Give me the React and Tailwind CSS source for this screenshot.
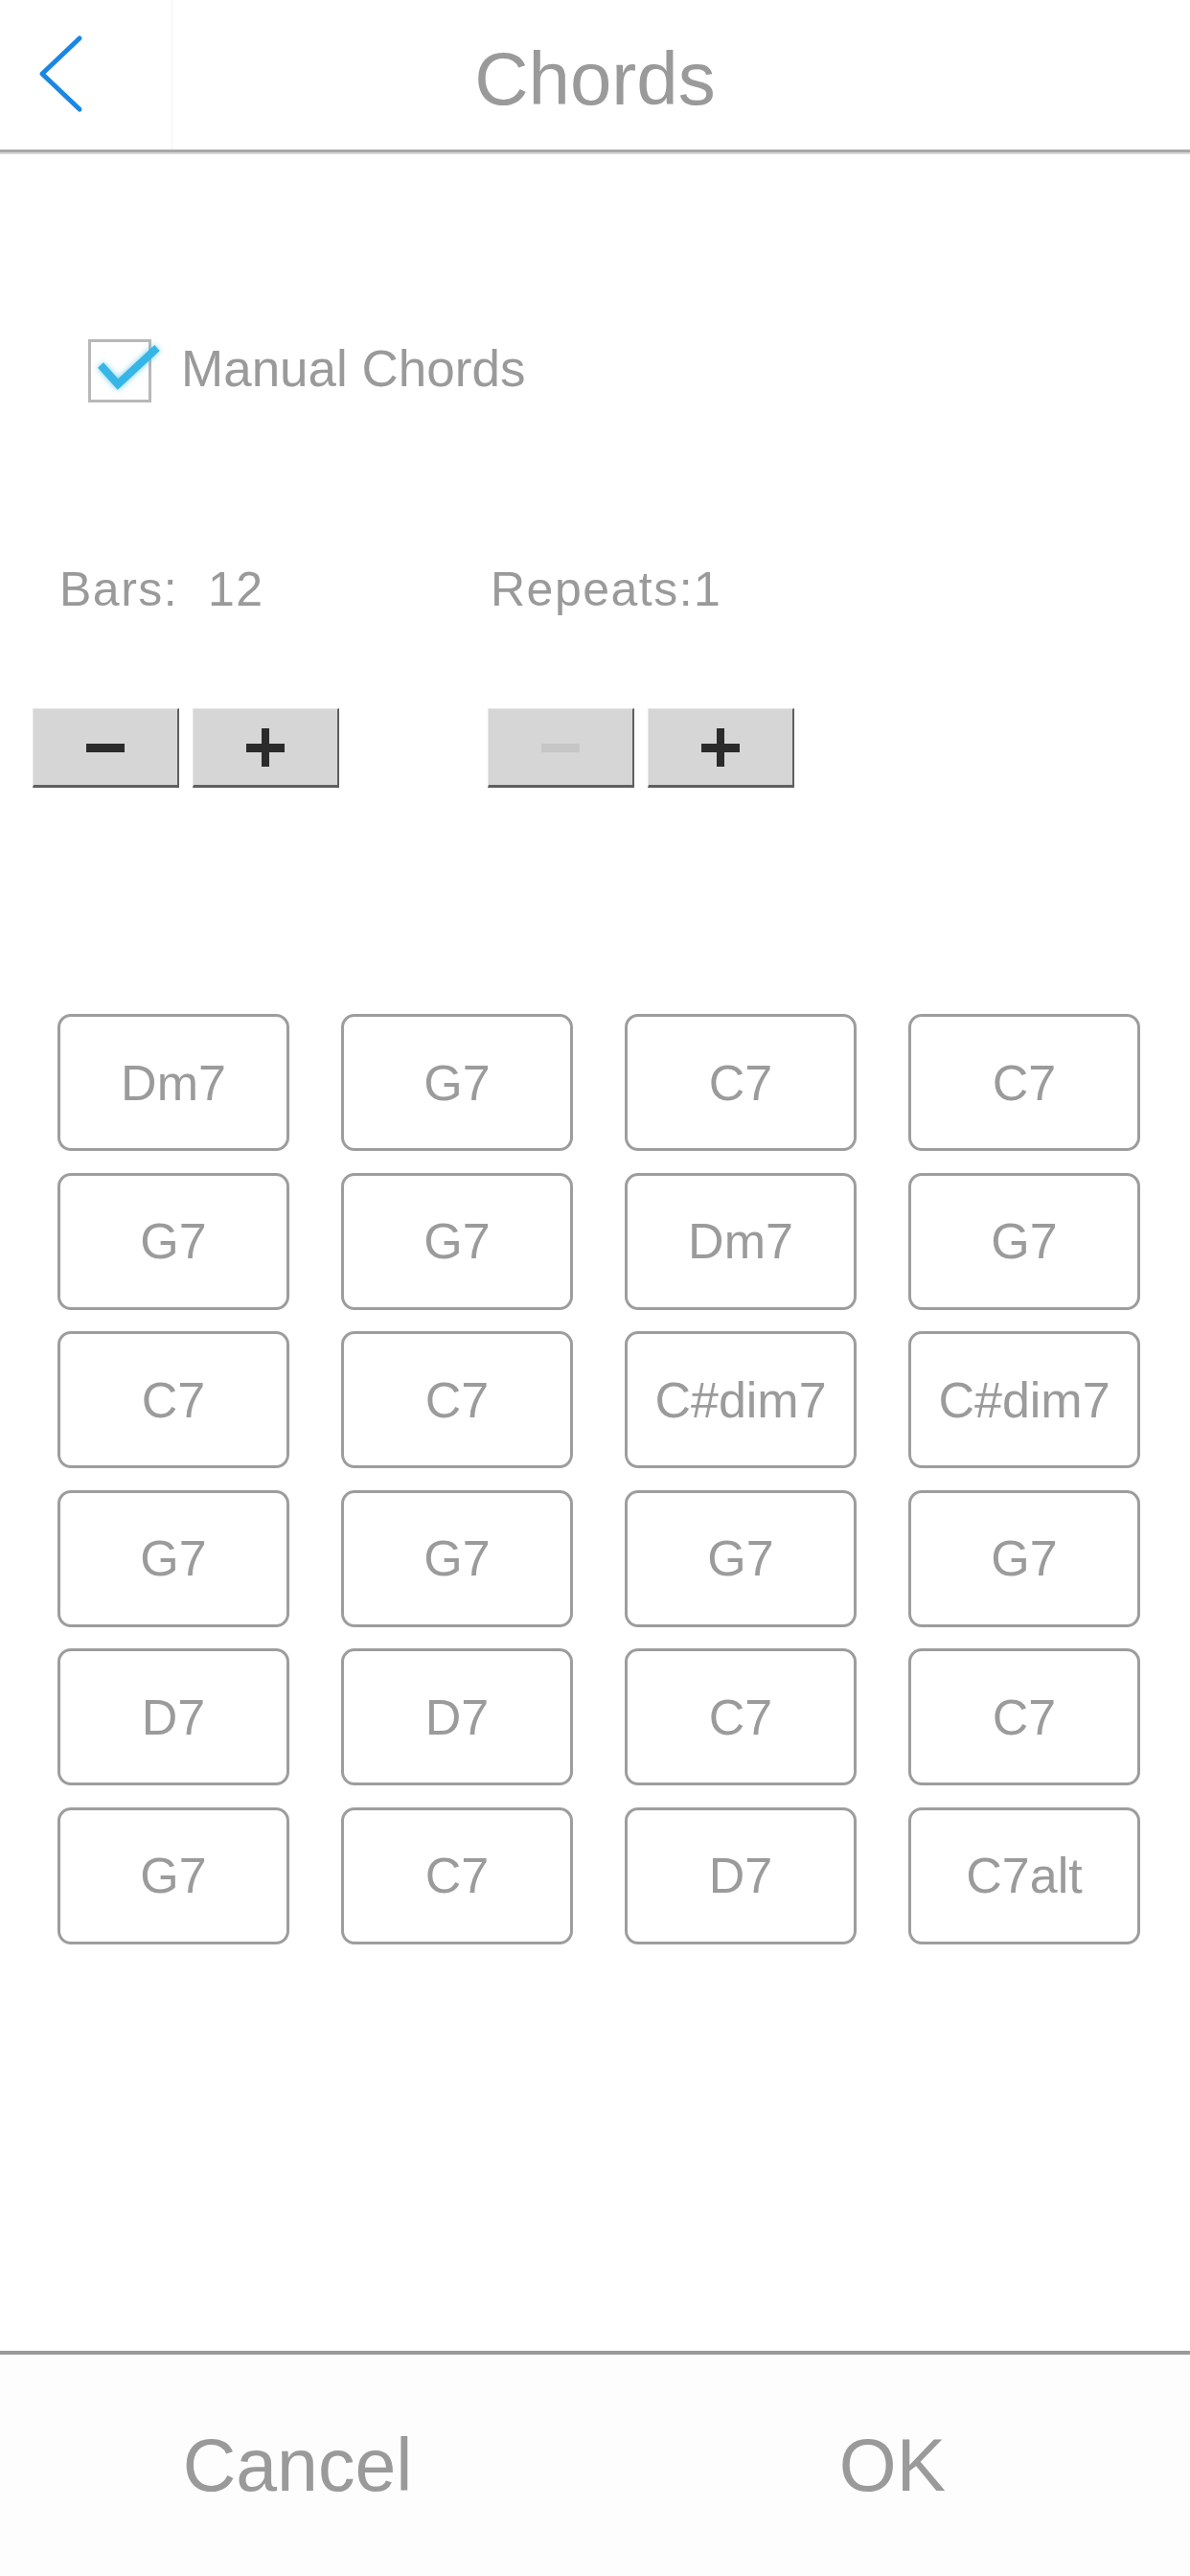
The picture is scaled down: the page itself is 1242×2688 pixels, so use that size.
import { useState } from 'react'

const chords = [
  ['Dm7', 'G7', 'C7', 'C7'],
  ['G7', 'G7', 'Dm7', 'G7'],
  ['C7', 'C7', 'C#dim7', 'C#dim7'],
  ['G7', 'G7', 'G7', 'G7'],
  ['D7', 'D7', 'C7', 'C7'],
  ['G7', 'C7', 'D7', 'C7alt'],
]

function StepButton({ kind, disabled }) {
  const color = disabled ? '#c6c6c6' : '#2b2b2b'
  return (
    <button className="w-[153px] h-[83px] bg-[#d6d6d6] border-t border-l border-[#e6e6e6] border-r-2 border-b-[3px] border-r-[#5f5f5f] border-b-[#5f5f5f] flex items-center justify-center">
      <svg width="40" height="40" viewBox="0 0 40 40">
        <rect x="0" y="16" width="40" height="9" fill={color} />
        {kind === 'plus' && <rect x="16" y="0" width="8" height="40" fill={color} />}
      </svg>
    </button>
  )
}

export default function App() {
  const [manual, setManual] = useState(true)

  return (
    <div className="w-[1242px] h-[2688px] flex flex-col bg-white text-[#9a9a9a] font-['Liberation_Sans',Arial,sans-serif]">
      {/* header */}
      <div className="h-[156px] grid grid-cols-[180px_1fr_180px] items-center">
        <div className="h-full flex items-center border-r border-[#f4f4f4]">
          <svg width="60" height="90" viewBox="0 0 60 90" className="ml-[34px] mt-[2px]">
            <polyline points="49,6 10,43 49,80" fill="none" stroke="#1b87e3" strokeWidth="5" strokeLinecap="round" strokeLinejoin="round" />
          </svg>
        </div>
        <h1 className="text-center text-[78px] leading-none mt-[8px]">Chords</h1>
        <div />
      </div>
      <div className="h-[3px] bg-[#a8a8a8]" />
      <div className="h-[2px] bg-[#d8d8d8]" />

      {/* manual chords */}
      <div className="mt-[193px] pl-[92px] flex items-center">
        <button onClick={() => setManual(!manual)} className="relative w-[66px] h-[66px] border-[3px] border-[#b8b8b8] bg-white">
          {manual && (
            <svg width="80" height="60" viewBox="0 0 80 60" className="absolute left-[-3px] top-[-3px] overflow-visible drop-shadow-[0_0_3px_rgba(54,182,230,0.7)]">
              <polyline points="13,27 31,47 72,9" fill="none" stroke="#36b6e6" strokeWidth="8" />
            </svg>
          )}
        </button>
        <span className="ml-[31px] text-[53px] leading-none mt-[-6px]">Manual Chords</span>
      </div>

      {/* bars / repeats */}
      <div className="mt-[170px] pl-[62px] flex text-[50px] leading-none tracking-[1.5px]">
        <span className="w-[450px] whitespace-pre">Bars:  12</span>
        <span>Repeats:1</span>
      </div>

      <div className="mt-[99px] pl-[34px] flex">
        <div className="flex gap-[14px]">
          <StepButton kind="minus" />
          <StepButton kind="plus" />
        </div>
        <div className="flex gap-[14px] ml-[155px]">
          <StepButton kind="minus" disabled />
          <StepButton kind="plus" />
        </div>
      </div>

      {/* chord grid */}
      <div className="mt-[236px] pl-[60px] grid grid-cols-[repeat(4,242px)] gap-x-[54px] gap-y-[22.5px]">
        {chords.flat().map((c, i) => (
          <button key={i} className="h-[143px] border-[3px] border-[#9d9d9d] rounded-[14px] flex items-center justify-center text-[52px] leading-none text-[#9b9b9b]">
            {c}
          </button>
        ))}
      </div>

      <div className="flex-1" />

      {/* footer */}
      <div className="h-[4px] bg-[#9a9a9a]" />
      <div className="h-[231px] bg-[#fdfdfd] grid grid-cols-2 items-center text-[77px] leading-none">
        <button className="text-center">Cancel</button>
        <button className="text-center">OK</button>
      </div>
    </div>
  )
}
